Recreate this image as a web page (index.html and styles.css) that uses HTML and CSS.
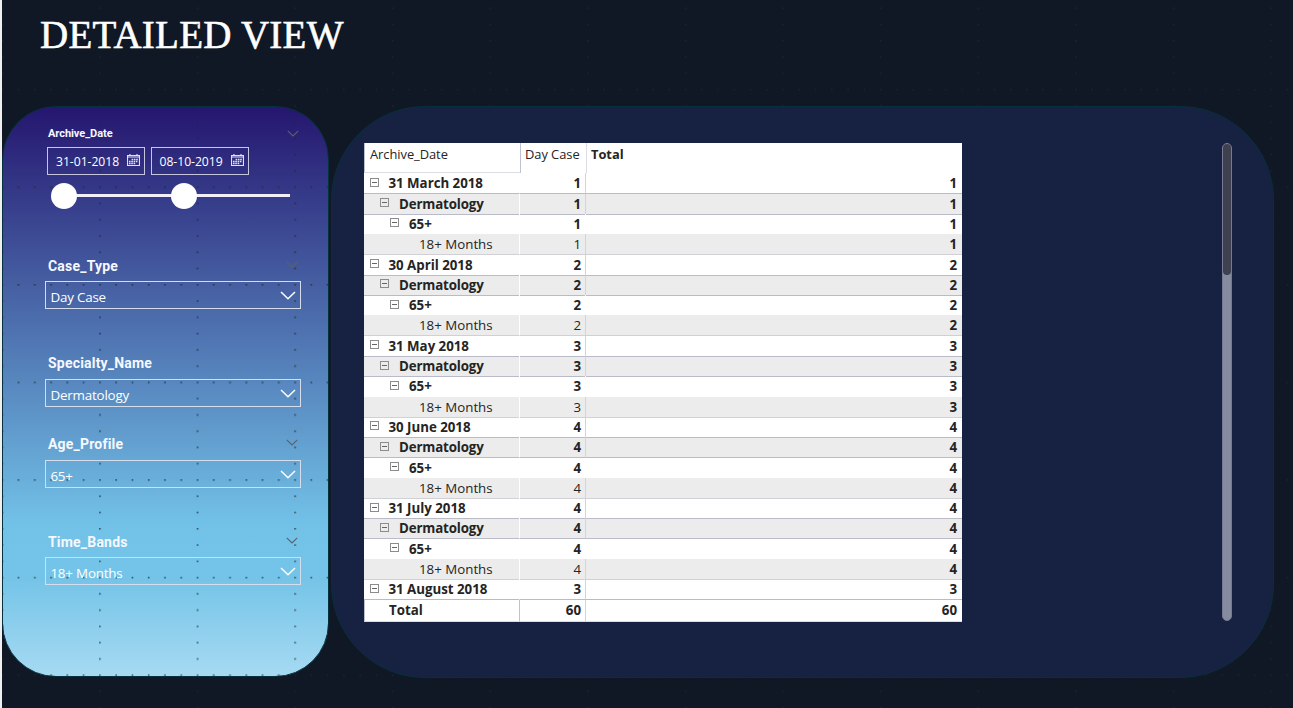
FILE: index.html
```html
<!DOCTYPE html>
<html lang="en">
<head>
<meta charset="utf-8">
<title>Detailed View</title>
<link rel="stylesheet" href="styles.css">
</head>
<body>
<svg class="defs" width="0" height="0">
  <defs>
    <symbol id="chev" viewBox="0 0 16 9"><path d="M1 1l7 6.8L15 1" fill="none" stroke="currentColor" stroke-width="1.5"/></symbol>
    <symbol id="cal" viewBox="0 0 13 12"><path d="M.5 1.5h12v10H.5zM.5 3h12M3 0v2M10 0v2" fill="none" stroke="currentColor" stroke-width="1.2"/><path d="M4.6 5.5h6.6M2 7.5h9.2M2 9.5h6.6" fill="none" stroke="currentColor" stroke-width="1.3" stroke-dasharray="1.6 .7"/></symbol>
  </defs>
</svg>
<main class="page">
  <h1 class="title">DETAILED VIEW</h1>
  <div class="panels">
    <aside class="filters">
      <section class="slicer date">
        <header class="label small"><span>Archive_Date</span><svg class="mini"><use href="#chev"/></svg></header>
        <div class="dates">
          <div class="datebox"><span>31-01-2018</span><svg class="cal"><use href="#cal"/></svg></div>
          <div class="datebox"><span>08-10-2019</span><svg class="cal"><use href="#cal"/></svg></div>
        </div>
        <div class="range"><i class="knob"></i><i class="knob"></i></div>
      </section>
      <section class="slicer case">
        <header class="label"><span>Case_Type</span><svg class="mini"><use href="#chev"/></svg></header>
        <div class="select"><span>Day Case</span><svg class="chev"><use href="#chev"/></svg></div>
      </section>
      <section class="slicer specialty">
        <header class="label"><span>Specialty_Name</span></header>
        <div class="select"><span>Dermatology</span><svg class="chev"><use href="#chev"/></svg></div>
      </section>
      <section class="slicer age">
        <header class="label"><span>Age_Profile</span><svg class="mini"><use href="#chev"/></svg></header>
        <div class="select"><span>65+</span><svg class="chev"><use href="#chev"/></svg></div>
      </section>
      <section class="slicer bands">
        <header class="label"><span>Time_Bands</span><svg class="mini"><use href="#chev"/></svg></header>
        <div class="select"><span>18+ Months</span><svg class="chev"><use href="#chev"/></svg></div>
      </section>
    </aside>
    <section class="report">
      <div class="matrix" id="matrix">
        <div class="head"><span>Archive_Date</span><span>Day Case</span><span>Total</span></div>
      </div>
      <div class="scroll"><div class="thumb"></div></div>
    </section>
  </div>
  <svg class="dots" width="1293" height="708">
    <defs>
      <pattern id="grid" x="1.5" y="-8.8" width="97.6" height="97.6" patternUnits="userSpaceOnUse">
        <g id="gridDots"></g>
      </pattern>
    </defs>
    <rect width="1293" height="708" fill="url(#grid)"/>
  </svg>
</main>
<script src="app.js"></script>
</body>
</html>
```
FILE: styles.css
```css
* { box-sizing: border-box; }
body { margin: 0; background: #111825; overflow: hidden; font-family: "Open Sans", "Noto Sans", sans-serif; }
.defs { position: absolute; }
.page { position: relative; width: 1293px; height: 708px; border-left: 2px solid #f0f0f0; overflow: hidden; }
.title { margin: 0; height: 106px; padding: 13px 0 0 38px; font: 400 39px/44px "Liberation Serif", serif; color: #fff; letter-spacing: .25px; -webkit-text-stroke: .6px #fff; white-space: nowrap; }
.panels { display: flex; gap: 2px; }
.dots { position: absolute; left: -2px; top: 0; fill: #20272b; opacity: .75; pointer-events: none; }

.filters { width: 327px; height: 571px; padding: 20px 27px 0 42px; border: 1px solid #06313f; border-radius: 54px; background: linear-gradient(#25166f 0, #72c2e8 73.5%, #75c4e8 83%, #a6daf2 100%); color: #fff; }
.slicer { position: relative; z-index: 1; }
.label { display: flex; justify-content: space-between; height: 23px; padding: 0 3px; font: 700 14px/17px Roboto, sans-serif; letter-spacing: .2px; color: #f5f8ff; }
.label.small { height: 20px; padding-right: 2px; font-size: 11px; line-height: 14px; letter-spacing: -.05px; }
.mini { width: 12px; height: 7px; margin-top: 3px; color: #59616e; }
.dates { display: flex; gap: 5.5px; padding-left: 2px; }
.datebox { display: flex; align-items: center; justify-content: space-between; width: 98px; height: 28px; padding: 0 4px 0 8px; border: 1px solid #c7c6df; font-size: 12.2px; color: #fff; letter-spacing: -.05px; }
.cal { width: 13px; height: 12px; margin-top: -3px; color: #e0e0f2; }
.range { display: flex; align-items: center; gap: 94px; width: 239px; height: 26px; margin: 8px 0 0 5.5px; background: linear-gradient(#f2effa, #f2effa) 12px 11px / 227px 3px no-repeat; }
.knob { width: 26px; height: 26px; border-radius: 50%; background: #fff; }
.select { display: flex; align-items: center; justify-content: space-between; width: 256px; height: 28px; padding: 3px 4px 0 5px; border: 1px solid #d5dceb; font-size: 13.4px; letter-spacing: -.2px; }
.select span { margin-left: -.6px; }
.chev { width: 16px; height: 9px; margin-top: -3px; }
.case { margin-top: 49px; }
.specialty { margin-top: 46px; }
.specialty .label, .age .label { height: 24px; }
.age { margin-top: 29px; }
.bands { margin-top: 46px; }

.report { display: flex; justify-content: space-between; width: 943px; height: 572px; padding: 36px 41px 0 32px; background: #172141; border: 1px solid #07303b; border-radius: 94px; }
.matrix { position: relative; z-index: 1; width: 598px; height: 478px; background: #fff; color: #252423; font-size: 13.3px; }
.head, .row { display: grid; grid-template-columns: 156px 66px 376px; }
.head { height: 30.4px; line-height: 23px; font-size: 12.9px; letter-spacing: -.05px; }
.head span { padding-left: 5px; border-left: 1px solid #dcdce4; }
.head span:first-child { border-bottom: 1px solid #dcdce4; border-left: 1px solid #bbbfd0; }
.head span:nth-child(2) { padding-left: 4px; border-color: #bfc2d0; white-space: nowrap; }
.head span:last-child { font-weight: 700; padding-left: 4px; }
.row { height: 20.31px; line-height: 20px; font-weight: 700; }
.cell { display: flex; align-items: center; height: 100%; border-bottom: 1px solid #b9bbc8; border-right: 1px solid #fff; letter-spacing: -.02px; white-space: nowrap; }
.num { justify-content: flex-end; padding-right: 4px; border-right-color: #d2d4dd; }
.num:last-child { padding-right: 5px; border-right: 0; }
.lvl0 { padding-left: 6px; gap: 9.5px; }
.lvl1 { padding-left: 16px; gap: 10px; letter-spacing: -.15px; }
.lvl2 { padding-left: 26px; gap: 10px; }
.lvl3 { padding-left: 55px; }
.shade { background: #ececec; }
.age-row .cell { border-bottom-color: transparent; border-right-color: #fff; }
.leaf .cell { border-bottom-color: #d0d0d5; }
.leaf .name, .leaf .count { font-weight: 400; }
.leaf .name { letter-spacing: 0; }
.total { height: 20.8px; line-height: 21px; }
.total .name { padding-left: 24px; border-left: 1px solid #bbbfd0; border-right-color: #bfc2d0; }
.total .cell { border-bottom-color: #dcdce4; }
.toggle { flex: none; width: 9px; height: 9px; margin-top: -2px; border: 1px solid #8c8c8c; background: linear-gradient(#666, #666) center / 5px 1px no-repeat; }
.scroll { position: relative; z-index: 1; width: 10px; height: 478px; border-radius: 5px; background: #878b9f; border: 1px solid #777b91; }
.thumb { height: 131px; border-radius: 5px; background: #3f4151; }
```
FILE: app.js
```js
const matrix = document.getElementById('matrix');
const months = [['31 March 2018', 1], ['30 April 2018', 2], ['31 May 2018', 3], ['30 June 2018', 4], ['31 July 2018', 4], ['31 August 2018', 3]];

function addRow(text, value, level, cls) {
  const row = document.createElement('div');
  row.className = 'row ' + cls;
  const toggle = level < 3 && cls !== 'total' ? '<i class="toggle"></i>' : '';
  row.innerHTML = `<div class="cell name lvl${level}">${toggle}<span>${text}</span></div><div class="cell num count">${value}</div><div class="cell num">${value}</div>`;
  matrix.append(row);
}

months.forEach(([name, value], i) => {
  addRow(name, value, 0, 'month');
  if (i === months.length - 1) return;
  addRow('Dermatology', value, 1, 'shade');
  addRow('65+', value, 2, 'age-row');
  addRow('18+ Months', value, 3, 'shade leaf');
});
addRow('Total', 60, 0, 'total');

const step = 97.6 / 6;
let dots = '';
for (let i = 0; i < 6; i++) {
  dots += `<rect x="${i * step}" y="0" width="1.6" height="1.6"/>`;
  if (i) dots += `<rect x="0" y="${i * step}" width="1.6" height="1.6"/>`;
}
document.getElementById('gridDots').innerHTML = dots;
```
